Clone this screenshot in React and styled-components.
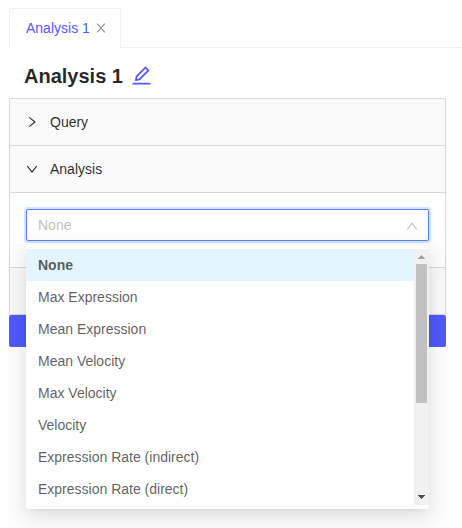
import React from "react";
import styled, { createGlobalStyle } from "styled-components";
import { AiOutlineEdit } from "react-icons/ai";

const GlobalStyle = createGlobalStyle`
  *, *::before, *::after { box-sizing: border-box; }
  html, body { margin: 0; background: #fff; overflow: hidden; }
  body {
    font-family: "Liberation Sans", Arial, sans-serif;
    font-size: 14px;
    line-height: 22px;
    color: rgba(0, 0, 0, 0.85);
  }
  svg { display: block; flex: none; }
`;

const Page = styled.main`
  height: 528px;
  padding: 8px 0 0 9px;
  overflow: hidden;
`;

const TabBar = styled.nav`
  display: flex;
  height: 40px;
  box-shadow: inset 0 -1px #f0f0f0;
`;

const Tab = styled.div`
  display: flex;
  align-items: center;
  gap: 6px;
  width: 112px;
  padding: 0 0 1px 16px;
  background: #fff;
  border: 1px solid #f0f0f0;
  border-bottom: 0;
  border-radius: 2px 2px 0 0;
  color: #505aff;

  svg { color: rgba(0, 0, 0, 0.45); }
`;

const TitleRow = styled.header`
  display: flex;
  align-items: center;
  gap: 7px;
  height: 50px;
  padding: 6px 0 0 15px;

  svg {
    margin-bottom: 1px;
    color: #505aff;
  }
`;

const Title = styled.h1`
  margin: 0;
  font-size: 20px;
  line-height: 28px;
  font-weight: 700;
`;

const Content = styled.div`
  width: 437px;
`;

const Collapse = styled.section`
  border: 1px solid #d9d9d9;
  border-bottom: 0;
  border-radius: 2px;
`;

const PanelHeader = styled.div`
  display: flex;
  align-items: center;
  gap: 12px;
  height: 47px;
  padding: 0 16px;
  background: #fafafa;
  border-bottom: 1px solid #d9d9d9;
`;

const PanelBody = styled.div`
  height: 75px;
  padding: 16px;
  background: #fff;
  border-bottom: 1px solid #d9d9d9;
`;

const SelectWrap = styled.div`
  position: relative;
`;

const SelectBox = styled.div`
  display: flex;
  align-items: center;
  justify-content: space-between;
  height: 32px;
  padding: 0 11px;
  border: 1px solid #5482ff;
  border-radius: 2px;
  box-shadow: 0 0 0 2px rgba(24, 124, 255, 0.2);
  color: #bfbfbf;
`;

const Dropdown = styled.div`
  position: absolute;
  z-index: 1;
  top: 36px;
  left: 0;
  display: flex;
  width: 403px;
  height: 264px;
  padding: 4px 0;
  background: #fff;
  border-radius: 2px;
  box-shadow: 0 3px 6px -4px rgba(0, 0, 0, 0.12),
    0 6px 16px 0 rgba(0, 0, 0, 0.08), 0 9px 28px 8px rgba(0, 0, 0, 0.05);
`;

const Options = styled.ul`
  flex: 1;
  margin: 0;
  padding: 0;
  list-style: none;
`;

const Option = styled.li`
  height: 32px;
  padding: 5px 12px;
  color: rgba(0, 0, 0, 0.65);
  font-weight: ${({ $selected }) => ($selected ? 600 : 400)};
  background: ${({ $selected }) => ($selected ? "#e4f5ff" : "#fff")};
`;

const Scrollbar = styled.div`
  display: flex;
  flex-direction: column;
  align-items: center;
  justify-content: space-between;
  width: 15px;
  padding: 6px 0;
  background: #f1f1f1;
`;

const Thumb = styled.div`
  width: 11px;
  height: 139px;
  margin: 5px 0 auto;
  background: #c1c1c1;
`;

const Submit = styled.div`
  height: 32px;
  background: #505aff;
  border-radius: 2px;
`;

const strokes = {
  close: "M1.2 1.6L8.8 10.4M8.8 1.6L1.2 10.4",
  right: "M3.2 1.4L9 6L3.2 10.6",
  down: "M1.4 3.2L6 9L10.6 3.2",
  up: "M2.4 10.2L7 4.2L11.6 10.2",
};

function Glyph({ name }) {
  return (
    <svg width="12" height="12" viewBox="0 0 12 12" overflow="visible">
      <path d={strokes[name]} fill="none" stroke="currentColor" strokeWidth="1.1" />
    </svg>
  );
}

const options = [
  "None",
  "Max Expression",
  "Mean Expression",
  "Mean Velocity",
  "Max Velocity",
  "Velocity",
  "Expression Rate (indirect)",
  "Expression Rate (direct)",
];

export default function App() {
  return (
    <Page>
      <GlobalStyle />
      <TabBar>
        <Tab>
          Analysis 1
          <Glyph name="close" />
        </Tab>
      </TabBar>
      <TitleRow>
        <Title>Analysis 1</Title>
        <AiOutlineEdit size={23} />
      </TitleRow>
      <Content>
        <Collapse>
          <PanelHeader>
            <Glyph name="right" />
            Query
          </PanelHeader>
          <PanelHeader>
            <Glyph name="down" />
            Analysis
          </PanelHeader>
          <PanelBody>
            <SelectWrap>
              <SelectBox>
                None
                <Glyph name="up" />
              </SelectBox>
              <Dropdown>
                <Options>
                  {options.map((label, index) => (
                    <Option key={label} $selected={index === 0}>
                      {label}
                    </Option>
                  ))}
                </Options>
                <Scrollbar>
                  <svg width="7" height="4" viewBox="0 0 7 4" shapeRendering="crispEdges">
                    <path d="M3 0h1v1h1v1h1v1h1v1H0V3h1V2h1V1h1z" fill="#a3a3a3" />
                  </svg>
                  <Thumb />
                  <svg width="7" height="4" viewBox="0 0 7 4" shapeRendering="crispEdges">
                    <path d="M0 0h7v1H6v1H5v1H4v1H3V3H2V2H1V1H0z" fill="#505050" />
                  </svg>
                </Scrollbar>
              </Dropdown>
            </SelectWrap>
          </PanelBody>
          <PanelHeader />
        </Collapse>
        <Submit />
      </Content>
    </Page>
  );
}
